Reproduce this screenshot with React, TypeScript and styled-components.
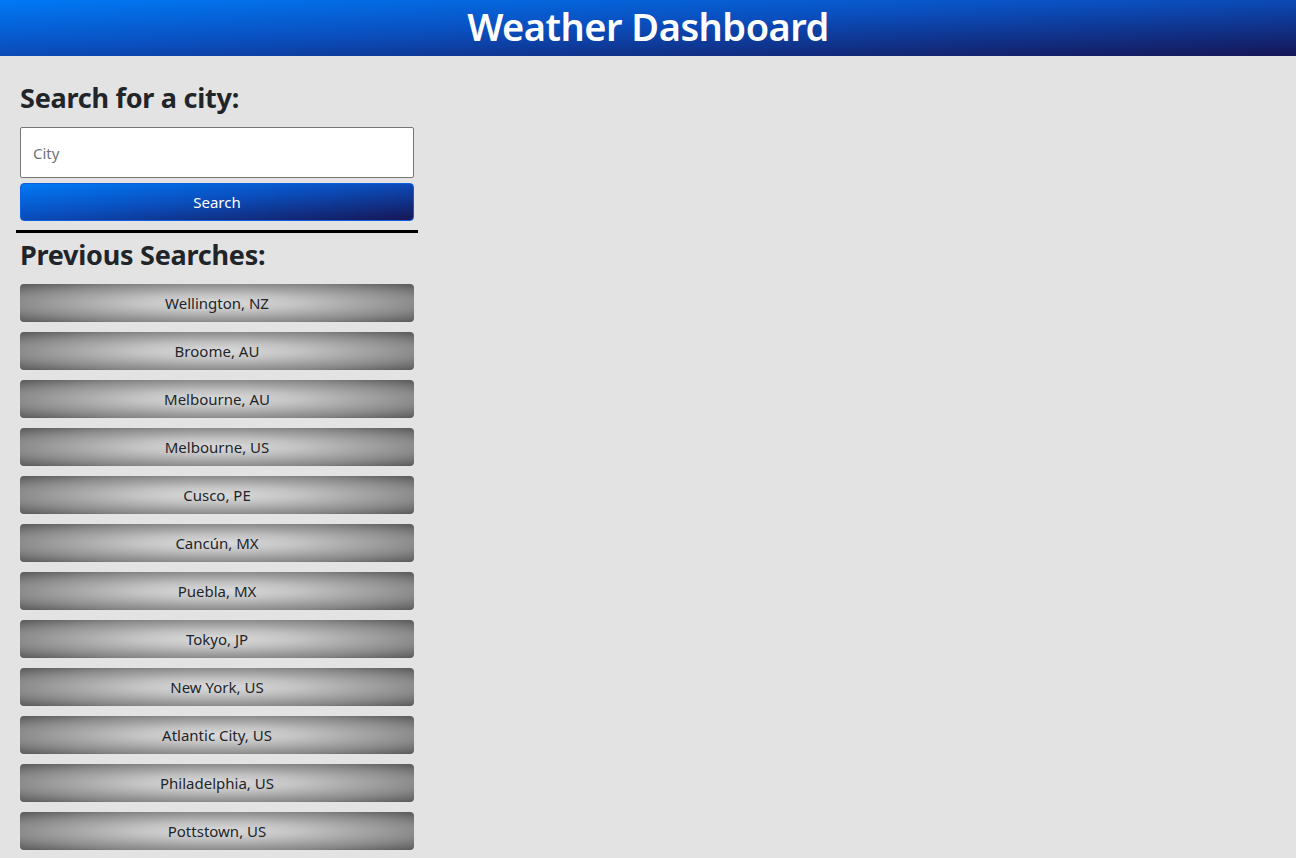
import React from 'react';
import styled, { createGlobalStyle } from 'styled-components';

const GlobalStyle = createGlobalStyle`
  html, body {
    margin: 0;
    padding: 0;
    background: #e3e3e3;
    font-family: "Noto Sans", "Open Sans", sans-serif;
    color: #212529;
  }
`

const blueGradient = 'linear-gradient(to bottom right, #0079f5 0%, #0a4fbf 45%, #161656 100%)'

const Styles = {
  Header: styled.header`
    height: 56px;
    display: flex;
    align-items: center;
    justify-content: center;
    background: ${blueGradient};
  `,

  Title: styled.h1`
    margin: 0 0 5px;
    color: #fff;
    font-size: 38px;
    font-weight: 600;
    letter-spacing: -0.5px;
    line-height: 1;
  `,

  Sidebar: styled.aside`
    width: 402px;
    margin-left: 16px;
    display: flex;
    flex-direction: column;
    padding-top: 25px;
  `,

  Heading: styled.h2<{ margin?: string }>`
    margin: ${p => p.margin || '0 4px'};
    font-size: 27px;
    font-weight: 700;
    line-height: 34px;
    letter-spacing: -0.25px;
  `,

  Input: styled.input`
    margin: 12px 4px 0;
    height: 51px;
    box-sizing: border-box;
    border: 1px solid #767676;
    border-radius: 2px;
    background: #fff;
    padding: 0 12px;
    font-family: inherit;
    font-size: 15px;
    &::placeholder { color: #6c757d; }
  `,

  SearchButton: styled.button`
    margin: 5px 4px 0;
    height: 38px;
    border: 1px solid #0d5fe0;
    border-radius: 4px;
    background: ${blueGradient};
    color: #fff;
    font-family: inherit;
    font-size: 15px;
  `,

  Rule: styled.div`
    height: 3px;
    background: #000;
    margin-top: 9px;
  `,

  List: styled.div`
    margin: 12px 4px 0;
    display: flex;
    flex-direction: column;
    gap: 10px;
  `,

  CityButton: styled.button`
    height: 38px;
    border: none;
    border-radius: 4px;
    background: radial-gradient(ellipse at center, #dcdcdc 0%, #c2c2c2 30%, #8a8a8a 72%, #595959 100%);
    color: #212529;
    font-family: inherit;
    font-size: 15px;
  `,
}

const cities = [
  'Wellington, NZ',
  'Broome, AU',
  'Melbourne, AU',
  'Melbourne, US',
  'Cusco, PE',
  'Cancún, MX',
  'Puebla, MX',
  'Tokyo, JP',
  'New York, US',
  'Atlantic City, US',
  'Philadelphia, US',
  'Pottstown, US',
]

export default function App() {
  return (
    <>
      <GlobalStyle />
      <Styles.Header>
        <Styles.Title>Weather Dashboard</Styles.Title>
      </Styles.Header>
      <Styles.Sidebar>
        <Styles.Heading>Search for a city:</Styles.Heading>
        <Styles.Input placeholder='City' />
        <Styles.SearchButton>Search</Styles.SearchButton>
        <Styles.Rule />
        <Styles.Heading margin='5px 4px 0'>Previous Searches:</Styles.Heading>
        <Styles.List>
          {cities.map(c => (
            <Styles.CityButton key={c}>{c}</Styles.CityButton>
          ))}
        </Styles.List>
      </Styles.Sidebar>
    </>
  )
}
